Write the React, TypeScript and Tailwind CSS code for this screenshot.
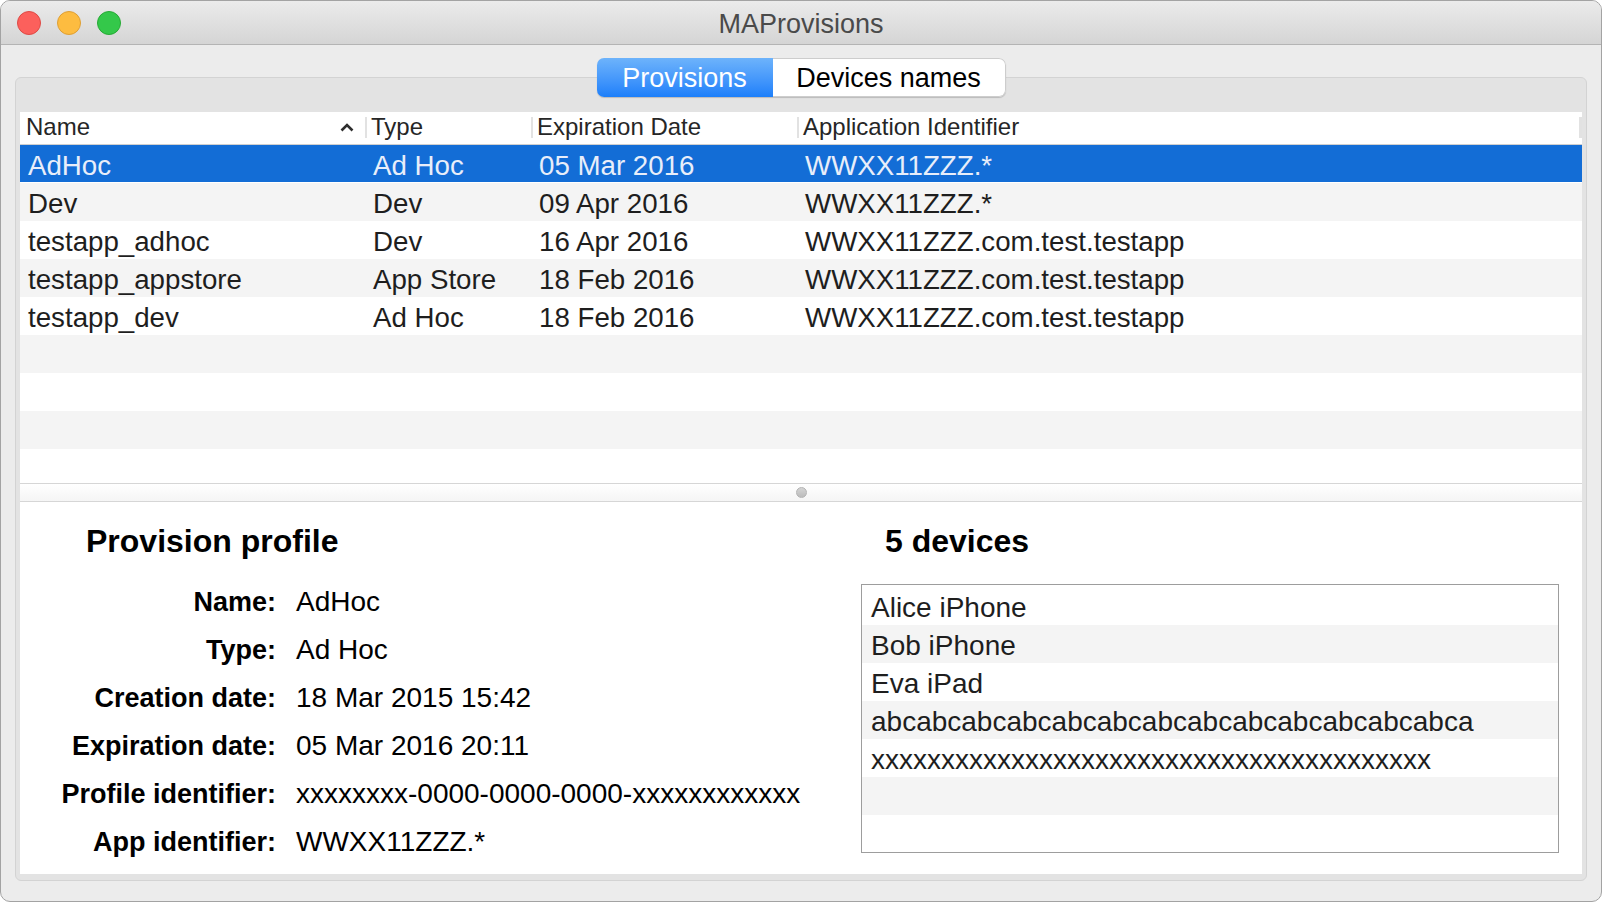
import React from 'react';

const FONT = "font-['Liberation_Sans',Arial,sans-serif]";

type Provision = { name: string; type: string; expires: string; appId: string };

const PROVISIONS: Provision[] = [
  { name: 'AdHoc', type: 'Ad Hoc', expires: '05 Mar 2016', appId: 'WWXX11ZZZ.*' },
  { name: 'Dev', type: 'Dev', expires: '09 Apr 2016', appId: 'WWXX11ZZZ.*' },
  { name: 'testapp_adhoc', type: 'Dev', expires: '16 Apr 2016', appId: 'WWXX11ZZZ.com.test.testapp' },
  { name: 'testapp_appstore', type: 'App Store', expires: '18 Feb 2016', appId: 'WWXX11ZZZ.com.test.testapp' },
  { name: 'testapp_dev', type: 'Ad Hoc', expires: '18 Feb 2016', appId: 'WWXX11ZZZ.com.test.testapp' },
];

const DEVICES = [
  'Alice iPhone',
  'Bob iPhone',
  'Eva iPad',
  'abcabcabcabcabcabcabcabcabcabcabcabcabca',
  'xxxxxxxxxxxxxxxxxxxxxxxxxxxxxxxxxxxxxxxx',
];

const DETAILS: [string, string][] = [
  ['Name:', 'AdHoc'],
  ['Type:', 'Ad Hoc'],
  ['Creation date:', '18 Mar 2015 15:42'],
  ['Expiration date:', '05 Mar 2016 20:11'],
  ['Profile identifier:', 'xxxxxxxx-0000-0000-0000-xxxxxxxxxxxx'],
  ['App identifier:', 'WWXX11ZZZ.*'],
];

const Sep = () => <div className="w-[2px] h-[21px] bg-[#e2e2e2] shrink-0" />;

const App: React.FC = () => {
  const selected = 0;
  const rows: (Provision | null)[] = [...PROVISIONS, null, null, null, null];
  const deviceRows: (string | null)[] = [...DEVICES, null, null];

  return (
    <div className={`${FONT} w-[1602px] h-[902px] bg-[#ececec] border border-[#a3a3a3] rounded-[10px] overflow-hidden flex flex-col text-[#1e1e1e]`}>
      {/* Title bar */}
      <div className="h-[44px] shrink-0 grid grid-cols-[1fr_auto_1fr] items-center bg-gradient-to-b from-[#ebebeb] to-[#d5d5d5] border-b border-[#b4b4b4]">
        <div className="flex items-center gap-[16px] pl-[16px]">
          <div className="w-[24px] h-[24px] rounded-full bg-[#fc605c] border border-[#de4a45]" />
          <div className="w-[24px] h-[24px] rounded-full bg-[#fdbc40] border border-[#de9f34]" />
          <div className="w-[24px] h-[24px] rounded-full bg-[#34c84a] border border-[#27aa35]" />
        </div>
        <div className="pt-[4px] text-[27px] text-[#4a4a4a] leading-none">MAProvisions</div>
        <div />
      </div>

      {/* Content */}
      <div className="flex-1 flex flex-col px-[14px] pt-[13px]">
        {/* Segmented control */}
        <div className="relative z-10 flex justify-center">
          <div className="flex h-[39px] rounded-[7px] shadow-[0_1px_1px_rgba(0,0,0,0.18)] overflow-hidden">
            <div className="w-[176px] pt-[2px] flex items-center justify-center bg-gradient-to-b from-[#6db3fb] to-[#1b7ffa] text-white text-[27px]">
              Provisions
            </div>
            <div className="w-[233px] pt-[2px] flex items-center justify-center bg-white border border-l-0 border-[#cdcdcd] rounded-r-[7px] text-black text-[27px]">
              Devices names
            </div>
          </div>
        </div>

        {/* Tab box */}
        <div className="-mt-[20px] h-[804px] border border-[#d3d3d3] rounded-[6px] bg-[#e3e3e3] pt-[34px] px-[4px] pb-[6px] flex flex-col">
          <div className="flex-1 bg-white flex flex-col">
            {/* Table */}
            <div className="h-[371px] flex flex-col">
              <div className="h-[33px] shrink-0 pb-[2px] flex items-center border-b border-[#cfcfcf] text-[24px] text-[#262626]">
                <div className="w-[345px] flex items-center justify-between pl-[6px] pr-[11px]">
                  <span>Name</span>
                  <svg width="14" height="9" viewBox="0 0 14 9" fill="none">
                    <path d="M1.5 7.5 L7 2 L12.5 7.5" stroke="#2e2e2e" strokeWidth="2.6" />
                  </svg>
                </div>
                <div className="w-[166px] flex items-center gap-[4px]">
                  <Sep />
                  <span>Type</span>
                </div>
                <div className="w-[266px] flex items-center gap-[4px]">
                  <Sep />
                  <span>Expiration Date</span>
                </div>
                <div className="flex-1 flex items-center gap-[4px]">
                  <Sep />
                  <span>Application Identifier</span>
                </div>
                <div className="w-[3px] h-[21px] bg-[#e2e2e2]" />
              </div>
              <div className="flex-1 overflow-hidden">
                {rows.map((r, i) => {
                  const isSel = i === selected;
                  const bg = isSel ? 'bg-[#136dd6] text-[#e8eefa] border-b border-white' : i % 2 === 1 ? 'bg-[#f4f4f4]' : 'bg-white';
                  return (
                    <div key={i} className={`h-[38px] pt-[4px] flex items-center text-[27.7px] leading-[34px] whitespace-nowrap ${bg}`}>
                      {r && (
                        <>
                          <div className="w-[345px] pl-[8px]">{r.name}</div>
                          <div className="w-[166px] pl-[8px]">{r.type}</div>
                          <div className="w-[266px] pl-[8px]">{r.expires}</div>
                          <div className="flex-1 pl-[8px]">{r.appId}</div>
                        </>
                      )}
                    </div>
                  );
                })}
              </div>
            </div>

            {/* Splitter */}
            <div className="h-[19px] shrink-0 border-y border-[#d6d6d6] bg-gradient-to-b from-white to-[#f5f5f5] flex items-center justify-center">
              <div className="w-[11px] h-[11px] rounded-full bg-gradient-to-b from-[#d4d4d4] to-[#bcbcbc] border border-[#b3b3b3]" />
            </div>

            {/* Details */}
            <div className="flex-1 flex">
              <div className="w-[841px] pt-[19px]">
                <div className="h-[40px] leading-[40px] pl-[66px] text-[32px] font-bold text-black">Provision profile</div>
                <div className="mt-[17px]">
                  {DETAILS.map(([label, value]) => (
                    <div key={label} className="h-[48px] flex items-center whitespace-nowrap">
                      <div className="w-[256px] text-right font-bold text-[27px] text-black">{label}</div>
                      <div className="ml-[20px] text-[28px] text-black">{value}</div>
                    </div>
                  ))}
                </div>
              </div>
              <div className="flex-1 pt-[19px] pr-[23px]">
                <div className="h-[40px] leading-[40px] pl-[24px] text-[32px] font-bold text-black">5 devices</div>
                <div className="mt-[23px] h-[269px] border border-[#9d9d9d] pt-[2px] overflow-hidden">
                  {deviceRows.map((d, i) => (
                    <div
                      key={i}
                      className={`h-[38px] pt-[4px] pl-[9px] leading-[34px] text-[28px] whitespace-nowrap ${i % 2 === 1 ? 'bg-[#f4f4f4]' : 'bg-white'}`}
                    >
                      {d}
                    </div>
                  ))}
                </div>
              </div>
            </div>
          </div>
        </div>
      </div>
    </div>
  );
};

export default App;
